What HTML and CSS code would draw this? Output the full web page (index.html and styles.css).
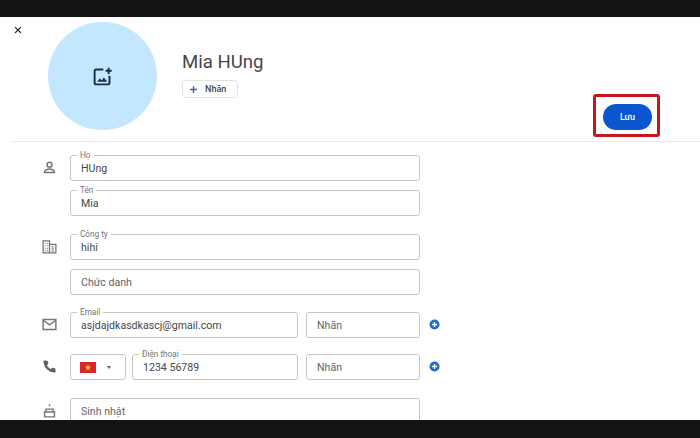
FILE: index.html
```html
<!DOCTYPE html>
<html lang="vi">
<head>
    <meta charset="UTF-8">
    <title>Mia HUng</title>
    <link rel="stylesheet" href="styles.css">
</head>
<body>
    <div class="screen">
        <div class="header">
            <svg class="close-icon" viewBox="0 0 24 24"><path d="M5 5l14 14M19 5L5 19"/></svg>
            <div class="avatar">
                <svg viewBox="0 0 24 24"><path d="M13 4H5a2 2 0 0 0-2 2v13a2 2 0 0 0 2 2h13a2 2 0 0 0 2-2v-8"/><path d="M19 2v7M15.500 5.500h7"/><path class="fill" d="M6 18l3-4 2 2.500 2.500-3.500 4 5z"/></svg>
            </div>
            <div class="name-block">
                <div class="name">Mia HUng</div>
                <div class="chip">
                    <svg viewBox="0 0 12 12"><path d="M6 1.500v9M1.500 6h9"/></svg>
                    <span>Nhãn</span>
                </div>
            </div>
            <div class="save-mark">
                <div class="save-btn">Lưu</div>
            </div>
        </div>

        <div class="form">
            <div class="section">
                <svg class="row-icon" viewBox="0 0 24 24"><circle cx="12" cy="8" r="3.500"/><path d="M5 19v-1c0-2.500 4.500-3.800 7-3.800s7 1.300 7 3.800v1z"/></svg>
                <div class="fields">
                    <div class="field"><span class="float-label">Họ</span>HUng</div>
                    <div class="field"><span class="float-label">Tên</span>Mia</div>
                </div>
            </div>
            <div class="section">
                <svg class="row-icon building" viewBox="0 0 24 24"><path d="M3 21V4h9v17zM12 9h9v12h-9z"/><path d="M5.500 7.500h1M8.500 7.500h1M5.500 11h1M8.500 11h1M5.500 14.500h1M8.500 14.500h1M5.500 18h1M8.500 18h1M15 12.500h3M15 15.500h3M15 18.500h3"/></svg>
                <div class="fields">
                    <div class="field"><span class="float-label">Công ty</span>hihi</div>
                    <div class="field placeholder">Chức danh</div>
                </div>
            </div>
            <div class="section">
                <svg class="row-icon" viewBox="0 0 24 24"><path d="M3 5h18v14H3z"/><path d="M3 6l9 6.500L21 6"/></svg>
                <div class="row">
                    <div class="field grow"><span class="float-label">Email</span>asjdajdkasdkascj@gmail.com</div>
                    <div class="field tag placeholder">Nhãn</div>
                    <svg class="add-btn" viewBox="0 0 12 12"><circle cx="6" cy="6" r="5.500"/><path d="M6 3.200v5.600M3.200 6h5.600"/></svg>
                </div>
            </div>
            <div class="section">
                <svg class="row-icon phone" viewBox="0 0 24 24"><path d="M6.600 3.500l3 .6.800 4-2 2c1.200 2.400 3.200 4.400 5.600 5.600l2-2 4 .8.600 3v2c0 .6-.4 1-1 1C11 20.500 3.500 13 3.500 4.500c0-.6.400-1 1-1z"/></svg>
                <div class="row">
                    <div class="field country">
                        <span class="flag"><svg viewBox="0 0 16 11"><path d="M8 2.300l.8 2.300h2.400l-1.900 1.500.7 2.400L8 7l-2 1.500.7-2.400-1.900-1.500h2.400z"/></svg></span>
                        <span class="caret"></span>
                    </div>
                    <div class="field grow"><span class="float-label">Điện thoại</span>1234 56789</div>
                    <div class="field tag placeholder">Nhãn</div>
                    <svg class="add-btn" viewBox="0 0 12 12"><circle cx="6" cy="6" r="5.500"/><path d="M6 3.200v5.600M3.200 6h5.600"/></svg>
                </div>
            </div>
            <div class="section">
                <svg class="row-icon" viewBox="0 0 24 24"><path d="M12 3v3M7 10h10v4H7zM5 14h14v7H5z"/></svg>
                <div class="fields">
                    <div class="field placeholder">Sinh nhật</div>
                </div>
            </div>
        </div>
    </div>
</body>
</html>
```

FILE: styles.css
```css
html, body {
    margin: 0;
    height: 438px;
    overflow: hidden;
    background-color: #131313;
}
body {
    padding: 17px 0 18px;
    box-sizing: border-box;
    font-family: Roboto, "Noto Sans", sans-serif;
    color: #3c4043;
}
.screen {
    height: 403px;
    overflow: hidden;
    background-color: #ffffff;
}
.header {
    position: relative;
    display: flex;
    height: 124px;
    padding-left: 48px;
}
.close-icon {
    position: absolute;
    left: 13px;
    top: 8px;
    width: 10px;
    height: 10px;
    fill: none;
    stroke: #202124;
    stroke-width: 3;
}
.avatar {
    width: 109px;
    height: 108px;
    margin-top: 5px;
    border-radius: 50%;
    background-color: #c2e7ff;
    display: flex;
    align-items: center;
    justify-content: center;
}
.avatar svg {
    width: 21px;
    height: 21px;
    fill: none;
    stroke: #1b2f42;
    stroke-width: 2.200;
}
.avatar svg .fill {
    fill: #1b2f42;
    stroke: none;
}
.name-block {
    margin: 33px 0 0 25px;
}
.name {
    font-size: 18.600px;
    line-height: 24px;
    color: #44474a;
}
.chip {
    display: flex;
    align-items: center;
    gap: 7px;
    width: 56px;
    height: 18px;
    box-sizing: border-box;
    margin-top: 6px;
    padding-left: 6px;
    border: 1px solid #e3e3e3;
    border-radius: 4px;
    font-size: 9px;
    font-weight: 500;
    color: #444746;
}
.chip svg {
    width: 9px;
    height: 9px;
    fill: none;
    stroke: #3f6299;
    stroke-width: 1.800;
}
.save-mark {
    position: absolute;
    left: 593px;
    top: 77px;
    width: 67px;
    height: 43px;
    box-sizing: border-box;
    padding: 2px 0 0 2px;
    border: 3px solid #c5161d;
    border-radius: 3px;
    display: flex;
    align-items: center;
    justify-content: center;
}
.save-btn {
    width: 49px;
    height: 26px;
    border-radius: 13px;
    background-color: #0b57d0;
    color: #ffffff;
    font-size: 9px;
    font-weight: 500;
    line-height: 26px;
    text-align: center;
}
.form {
    margin-left: 10px;
    padding-top: 13px;
    border-top: 1px solid #e8eaed;
}
.section {
    display: flex;
    margin-bottom: 17px;
}
.section:nth-child(1),
.section:nth-child(4) {
    margin-bottom: 18px;
}
.section:nth-child(3) {
    margin-bottom: 16px;
}
.row-icon {
    flex: none;
    width: 17px;
    height: 17px;
    margin: 4px 12px 0 31px;
    fill: none;
    stroke: #70757a;
    stroke-width: 2;
}
.row-icon.building {
    stroke-width: 1.800;
}
.row-icon.phone {
    fill: #5f6368;
    stroke: none;
}
.fields {
    display: flex;
    flex-direction: column;
    gap: 9px;
    width: 350px;
}
.row {
    display: flex;
    gap: 8px;
    align-items: center;
    width: 370px;
}
.field {
    position: relative;
    height: 26px;
    box-sizing: border-box;
    padding: 4px 10px 0 10px;
    border: 1px solid #c4c7c5;
    border-radius: 3px;
    font-size: 10.600px;
    line-height: 17px;
    color: #44474a;
    white-space: nowrap;
}
.field.placeholder {
    color: #5f6368;
}
.field.grow {
    flex: 1;
}
.field.tag {
    flex: none;
    width: 114px;
}
.float-label {
    position: absolute;
    left: 6px;
    top: -5px;
    padding: 0 3px;
    background-color: #ffffff;
    font-size: 8.200px;
    line-height: 9px;
    color: #70757a;
}
.field.country {
    flex: none;
    width: 56px;
    display: flex;
    align-items: center;
    gap: 11px;
    padding: 0 0 0 9px;
    margin-right: -2px;
}
.flag {
    display: block;
    width: 16px;
    height: 11px;
    background-color: #d8262c;
}
.flag svg {
    display: block;
    width: 16px;
    height: 11px;
    fill: #f7d038;
}
.caret {
    width: 0;
    height: 0;
    border-left: 2.500px solid transparent;
    border-right: 2.500px solid transparent;
    border-top: 3px solid #5f6368;
}
.add-btn {
    flex: none;
    width: 11px;
    height: 11px;
    margin: 0 0 1px 1px;
    fill: none;
}
.add-btn circle {
    fill: #1a6fd0;
}
.add-btn path {
    stroke: #ffffff;
    stroke-width: 1.500;
}
```
